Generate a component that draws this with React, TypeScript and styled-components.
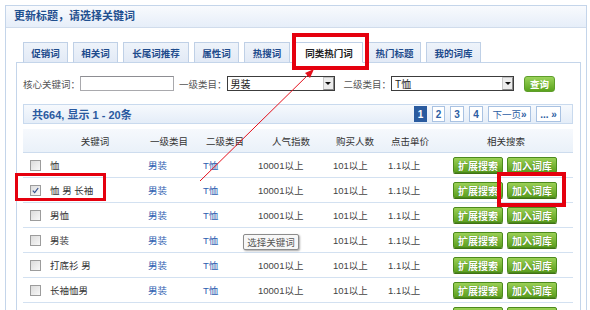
import React from 'react'
import styled, { createGlobalStyle } from 'styled-components'

const GlobalStyle = createGlobalStyle`
  html, body {
    margin: 0;
    padding: 0;
    background: #fff;
  }
  body {
    font-family: 'Liberation Sans', 'Noto Sans CJK SC', sans-serif;
    font-size: 9.5px;
    color: #444;
  }
`

const Page = styled.div`
  position: relative;
  width: 590px;
  height: 310px;
  overflow: hidden;
  padding: 5px 0 0 5px;
  box-sizing: border-box;
`

const Panel = styled.div`
  width: 582px;
  height: 340px;
  box-sizing: border-box;
  border: 1px solid #c4d5ea;
`

const TitleBar = styled.div`
  height: 22px;
  box-sizing: border-box;
  line-height: 21px;
  padding-left: 8px;
  border-bottom: 1px solid #d0dcec;
  background: linear-gradient(#f8fafd, #e6eef9);
  color: #1f4f8f;
  font-size: 11px;
  font-weight: 700;
`

const Body = styled.div`
  padding: 14px 5px 0 10px;
`

const TabRow = styled.div`
  position: relative;
  z-index: 2;
  display: flex;
  align-items: flex-end;
  gap: 5px;
  height: 21px;
  margin-bottom: -1px;
  padding-left: 7px;
`

const Tab = styled.div<{ $w: number; $active?: boolean }>`
  position: relative;
  width: ${p => p.$w}px;
  height: 21px;
  box-sizing: border-box;
  border: 1px solid #bfd0e6;
  border-bottom-color: ${p => (p.$active ? '#fff' : '#c4d5ea')};
  background: ${p => (p.$active ? '#fff' : 'linear-gradient(#eef3fa, #e2eaf6)')};
  color: ${p => (p.$active ? '#222' : '#1e4b8c')};
  font-weight: 700;
  display: flex;
  align-items: center;
  justify-content: center;
  white-space: nowrap;
`

const RedFrame = styled.span<{ $t: number; $l: number; $w: number; $h: number; $b: number }>`
  position: absolute;
  top: ${p => p.$t}px;
  left: ${p => p.$l}px;
  width: ${p => p.$w}px;
  height: ${p => p.$h}px;
  box-sizing: border-box;
  border: ${p => p.$b}px solid #e5000e;
  pointer-events: none;
  z-index: 4;
`

const ContentBox = styled.div`
  border: 1px solid #c4d5ea;
  padding: 12px 7px 0 6px;
  height: 300px;
`

const FilterRow = styled.div`
  display: flex;
  align-items: center;
  height: 17px;
`

const Label = styled.span`
  color: #555;
  white-space: nowrap;
`

const TextInput = styled.div`
  width: 94px;
  height: 15px;
  box-sizing: border-box;
  border: 1px solid #a9a9ad;
  border-top-color: #8d8d92;
  background: #fff;
  margin-right: 5px;
`

const Select = styled.div<{ $w: number; $gap: number }>`
  width: ${p => p.$w}px;
  height: 15px;
  box-sizing: border-box;
  border: 1px solid #3c3c3c;
  background: #fff;
  display: flex;
  align-items: center;
  justify-content: space-between;
  padding-left: 3px;
  margin-right: ${p => p.$gap}px;
  color: #222;
  font-size: 10px;
`

const SelectArrow = styled.span`
  width: 11px;
  height: 13px;
  box-sizing: border-box;
  border: 1px solid #c6c6c6;
  border-right-color: #8a8a8a;
  border-bottom-color: #8a8a8a;
  background: #ececec;
  display: flex;
  align-items: center;
  justify-content: center;
  &::after {
    content: '';
    border-left: 3px solid transparent;
    border-right: 3px solid transparent;
    border-top: 3px solid #111;
  }
`

const QueryButton = styled.span`
  width: 31px;
  height: 16px;
  box-sizing: border-box;
  margin-left: 2px;
  border: 1px solid #5e9d2b;
  border-radius: 3px;
  background: linear-gradient(#9bd35a, #5aa31c);
  color: #fff;
  font-weight: 700;
  display: flex;
  align-items: center;
  justify-content: center;
`

const Pager = styled.div`
  margin-top: 12px;
  height: 20px;
  box-sizing: border-box;
  border: 1px solid #c9daee;
  background: linear-gradient(#f6f9fd, #e4edf8);
  display: flex;
  align-items: center;
  justify-content: space-between;
  padding: 0 11px 0 8px;
`

const Count = styled.span`
  color: #2a5aa0;
  font-size: 11px;
  font-weight: 700;
`

const Pages = styled.div`
  display: flex;
  gap: 5px;
`

const PageBtn = styled.span<{ $w: number; $active?: boolean }>`
  width: ${p => p.$w}px;
  height: 16px;
  box-sizing: border-box;
  border: 1px solid ${p => (p.$active ? '#2a5b9f' : '#a9c2e2')};
  background: ${p => (p.$active ? '#2a5b9f' : '#fff')};
  color: ${p => (p.$active ? '#fff' : '#2d5ea3')};
  font-size: 10px;
  font-weight: 700;
  display: flex;
  align-items: center;
  justify-content: center;
  white-space: nowrap;
  > em {
    font-style: normal;
    font-weight: 400;
    font-size: 9.5px;
  }
`

const Table = styled.div`
  margin-top: 5px;
`

const cols = '117px 58px 54px 73px 55px 60px 132px'

const HeaderRow = styled.div`
  display: grid;
  grid-template-columns: ${cols};
  height: 24px;
  box-sizing: border-box;
  border-bottom: 1px solid #cddcee;
  background: linear-gradient(#f6f9fd, #eaf1f9);
  align-items: center;
  color: #333;
`

const HeadCell = styled.span<{ $pad?: number }>`
  text-align: center;
  padding-left: ${p => p.$pad || 0}px;
  white-space: nowrap;
`

const Row = styled.div`
  display: grid;
  grid-template-columns: ${cols};
  height: 25px;
  box-sizing: border-box;
  border-bottom: 1px solid #d3e1f1;
`

const Cell = styled.div<{ $pad: number }>`
  position: relative;
  display: flex;
  align-items: center;
  padding-left: ${p => p.$pad}px;
  white-space: nowrap;
  color: #444;
`

const LinkText = styled.span`
  color: #2c5db0;
`

const Checkbox = styled.span`
  width: 11px;
  height: 11px;
  box-sizing: border-box;
  border: 1px solid #9c9c9c;
  background: linear-gradient(135deg, #dcdcdc, #f8f8f8);
  margin-right: 9px;
  display: flex;
  align-items: center;
  justify-content: center;
`

const Keyword = styled.span`
  color: #333;
`

const BtnWrap = styled.span`
  position: relative;
  display: inline-flex;
`

const GreenBtn = styled.span`
  width: 50px;
  height: 16px;
  box-sizing: border-box;
  border: 1px solid #4c8a1c;
  border-radius: 2px;
  background: linear-gradient(#9ad055, #5c9f1f);
  box-shadow: 0 1px 0 #3f7215;
  color: #fff;
  font-size: 10px;
  font-weight: 700;
  display: flex;
  align-items: center;
  justify-content: center;
  text-shadow: 0 0 1px #3c6e12;
`

const Buttons = styled.div`
  display: flex;
  gap: 4px;
`

const Tooltip = styled.span`
  position: absolute;
  left: -9px;
  top: 6px;
  width: 56px;
  height: 16px;
  box-sizing: border-box;
  border: 1px solid #8c8c8c;
  border-radius: 2px;
  background: #f7f7f7;
  box-shadow: 1px 1px 2px rgba(0, 0, 0, 0.35);
  color: #555;
  display: flex;
  align-items: center;
  justify-content: center;
  z-index: 3;
`

const ArrowLayer = styled.svg`
  position: absolute;
  left: 0;
  top: 0;
  z-index: 6;
  pointer-events: none;
`

const tabs = [
  { label: '促销词', w: 45 },
  { label: '相关词', w: 45 },
  { label: '长尾词推荐', w: 66 },
  { label: '属性词', w: 45 },
  { label: '热搜词', w: 46 },
  { label: '同类热门词', w: 68, active: true },
  { label: '热门标题', w: 53 },
  { label: '我的词库', w: 55 },
]

const rows = [
  { kw: '恤' },
  { kw: '恤 男 长袖', checked: true },
  { kw: '男恤' },
  { kw: '男装', tip: true },
  { kw: '打底衫 男' },
  { kw: '长袖恤男' },
]

const App = () => {
  return (
    <>
      <GlobalStyle />
      <Page>
        <Panel>
          <TitleBar>更新标题，请选择关键词</TitleBar>
          <Body>
            <TabRow>
              {tabs.map(t => (
                <Tab key={t.label} $w={t.w} $active={t.active}>
                  {t.label}
                  {t.active && <RedFrame $t={-10} $l={-4} $w={77} $h={37} $b={4} />}
                </Tab>
              ))}
            </TabRow>
            <ContentBox>
              <FilterRow>
                <Label>核心关键词：</Label>
                <TextInput />
                <Label>一级类目：</Label>
                <Select $w={108} $gap={9}>
                  男装
                  <SelectArrow />
                </Select>
                <Label>二级类目：</Label>
                <Select $w={123} $gap={8}>
                  T恤
                  <SelectArrow />
                </Select>
                <QueryButton>查询</QueryButton>
              </FilterRow>

              <Pager>
                <Count>共664, 显示 1 - 20条</Count>
                <Pages>
                  <PageBtn $w={13} $active>1</PageBtn>
                  <PageBtn $w={13}>2</PageBtn>
                  <PageBtn $w={14}>3</PageBtn>
                  <PageBtn $w={14}>4</PageBtn>
                  <PageBtn $w={43}><em>下一页</em>»</PageBtn>
                  <PageBtn $w={25}>... »</PageBtn>
                </Pages>
              </Pager>

              <Table>
                <HeaderRow>
                  <HeadCell $pad={27}>关键词</HeadCell>
                  <HeadCell>一级类目</HeadCell>
                  <HeadCell>二级类目</HeadCell>
                  <HeadCell $pad={5}>人气指数</HeadCell>
                  <HeadCell $pad={5}>购买人数</HeadCell>
                  <HeadCell>点击单价</HeadCell>
                  <HeadCell>相关搜索</HeadCell>
                </HeaderRow>
                {rows.map((r, i) => (
                  <Row key={i}>
                    <Cell $pad={7}>
                      <Checkbox>
                        {r.checked && (
                          <svg width="7" height="7" viewBox="0 0 7 7">
                            <path d="M0.8 3.6 L2.7 5.6 L6.2 1" fill="none" stroke="#34508c" strokeWidth="1.2" />
                          </svg>
                        )}
                      </Checkbox>
                      <Keyword>{r.kw}</Keyword>
                      {r.checked && <RedFrame $t={-5} $l={-8} $w={91} $h={28} $b={3} />}
                    </Cell>
                    <Cell $pad={8}><LinkText>男装</LinkText></Cell>
                    <Cell $pad={5}><LinkText>T恤</LinkText></Cell>
                    <Cell $pad={6}>
                      {r.tip ? <Tooltip>选择关键词</Tooltip> : '10001以上'}
                    </Cell>
                    <Cell $pad={8}>101以上</Cell>
                    <Cell $pad={8}>1.1以上</Cell>
                    <Cell $pad={13}>
                      <Buttons>
                        <GreenBtn>扩展搜索</GreenBtn>
                        <BtnWrap>
                          <GreenBtn>加入词库</GreenBtn>
                          {r.checked && <RedFrame $t={-10} $l={-10} $w={69} $h={35} $b={4} />}
                        </BtnWrap>
                      </Buttons>
                    </Cell>
                  </Row>
                ))}
                {/* next row only peeks in at the bottom edge */}
                <Row>
                  <Cell $pad={7} />
                  <Cell $pad={8} />
                  <Cell $pad={5} />
                  <Cell $pad={6} />
                  <Cell $pad={8} />
                  <Cell $pad={8} />
                  <Cell $pad={13}>
                    <Buttons>
                      <GreenBtn />
                      <GreenBtn />
                    </Buttons>
                  </Cell>
                </Row>
              </Table>
            </ContentBox>
          </Body>
        </Panel>

        <ArrowLayer width="590" height="310" viewBox="0 0 590 310">
          <line x1="200" y1="181" x2="310" y2="73" stroke="#e3101c" strokeWidth="1" />
          <path d="M314 69 L305 73 L310 78 Z" fill="#e3101c" />
        </ArrowLayer>
      </Page>
    </>
  )
}

export default App
